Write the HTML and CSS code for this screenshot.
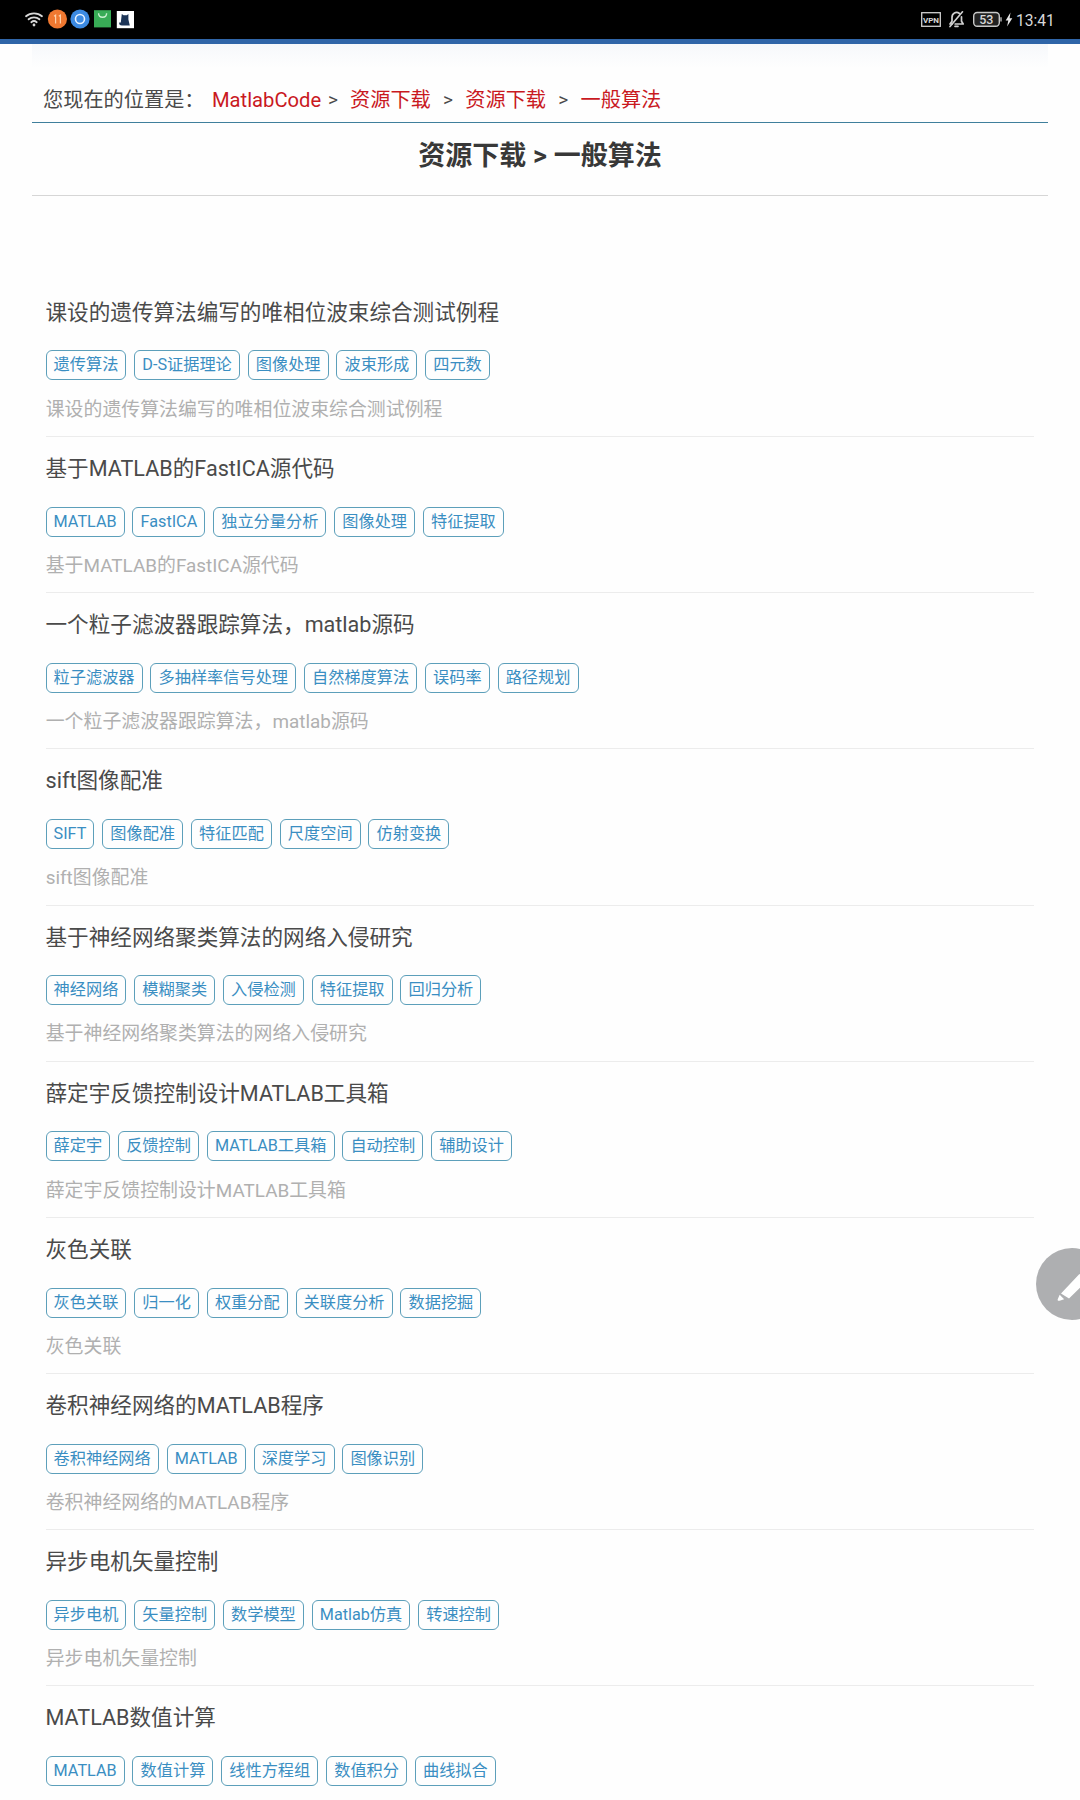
FILE: index.html
```html
<!DOCTYPE html>
<html lang="zh-CN">

<head>
  <meta charset="UTF-8">
  <meta name="viewport" content="width=device-width, initial-scale=1.0">
  <title>资源下载 - 一般算法</title>
  <link rel="stylesheet" href="styles.css">
</head>

<body>
  <div class="status">
    <svg class="status-left" width="140" height="39" viewBox="0 0 140 39">
      <!-- wifi -->
      <g fill="none" stroke="#d8d8d8" stroke-width="1.8" stroke-linecap="round">
        <path d="M26 16.2c4.400-3.800 11.600-3.800 16 0"/>
        <path d="M28.600 19.300c3-2.600 7.800-2.600 10.800 0"/>
        <path d="M31.300 22.200c1.500-1.300 3.900-1.300 5.400 0"/>
      </g>
      <circle cx="34" cy="25" r="1.400" fill="#d8d8d8"/>
      <!-- app notifications -->
      <circle cx="57.400" cy="19" r="9.600" fill="#f07830"/>
      <path d="M54 16.200l1.600-1v8.300M58.800 16.200l1.600-1v8.300" fill="none" stroke="#ffd0a8" stroke-width="1.200"/>
      <circle cx="80" cy="19" r="9.600" fill="#3c8ae2"/>
      <circle cx="80" cy="19" r="4.500" fill="none" stroke="#e4f0ff" stroke-width="1.600"/>
      <rect x="94" y="10.200" width="17" height="17.200" fill="#38ac56"/>
      <path d="M98.600 13.300c0 5.300 8 5.300 8 0" fill="none" stroke="#c9f0cf" stroke-width="1.400"/>
      <rect x="116.800" y="11" width="17.200" height="17.200" fill="#fff"/>
      <path d="M121.800 14l1.800 1.200h3.200l1.600-1.200v5.500l1.400 6h-7.800c-2.300 0-3-1-2.800-3h1.600z" fill="#1d3557"/>
    </svg>
    <svg class="status-right" width="160" height="39" viewBox="920 0 160 39">
      <rect x="921.700" y="12.700" width="18.600" height="13.600" fill="none" stroke="#d0d0d0" stroke-width="1.300"/>
      <text class="vpn" x="931" y="22.500" text-anchor="middle">VPN</text>
      <!-- muted bell -->
      <g fill="none" stroke="#d0d0d0" stroke-width="1.700" stroke-linecap="round" stroke-linejoin="round">
        <path d="M959.500 13.500c-3.500-2.400-7.500-.2-7.500 4v3.700l-2 2.800h2M961.500 16.800v4.400l1.700 2.800h-8"/>
        <path d="M962.500 11.800L950 26.500M955 26.300h3"/>
      </g>
      <!-- battery -->
      <rect x="973.700" y="12.500" width="25.600" height="13.800" rx="3.500" fill="#222" stroke="#c8c8c8" stroke-width="1.400"/>
      <path d="M1001 17.200v4.400" stroke="#c8c8c8" stroke-width="1.300"/>
      <text class="battery" x="986.300" y="23.900" text-anchor="middle">53</text>
      <path d="M1010.500 12.500l-4.800 8h2.600l-1.200 6 5.200-8.200h-2.700z" fill="#e8e8e8"/>
      <text class="clock" x="1016" y="26">13:41</text>
    </svg>
  </div>

  <div class="main">
    <div class="crumb">
      <span class="crumb-label">您现在的位置是：</span>
      <a class="site">MatlabCode</a><i class="first">&gt;</i>
      <a>资源下载</a><i>&gt;</i>
      <a>资源下载</a><i>&gt;</i>
      <a>一般算法</a>
    </div>
    <h1>资源下载 &gt; 一般算法</h1>

    <ul class="list">
      <li>
        <h2>课设的遗传算法编写的唯相位波束综合测试例程</h2>
        <div class="tags"><a>遗传算法</a><a>D-S证据理论</a><a>图像处理</a><a>波束形成</a><a>四元数</a></div>
        <p>课设的遗传算法编写的唯相位波束综合测试例程</p>
      </li>
      <li>
        <h2>基于MATLAB的FastICA源代码</h2>
        <div class="tags"><a>MATLAB</a><a>FastICA</a><a>独立分量分析</a><a>图像处理</a><a>特征提取</a></div>
        <p>基于MATLAB的FastICA源代码</p>
      </li>
      <li>
        <h2>一个粒子滤波器跟踪算法，matlab源码</h2>
        <div class="tags"><a>粒子滤波器</a><a>多抽样率信号处理</a><a>自然梯度算法</a><a>误码率</a><a>路径规划</a></div>
        <p>一个粒子滤波器跟踪算法，matlab源码</p>
      </li>
      <li>
        <h2>sift图像配准</h2>
        <div class="tags"><a>SIFT</a><a>图像配准</a><a>特征匹配</a><a>尺度空间</a><a>仿射变换</a></div>
        <p>sift图像配准</p>
      </li>
      <li>
        <h2>基于神经网络聚类算法的网络入侵研究</h2>
        <div class="tags"><a>神经网络</a><a>模糊聚类</a><a>入侵检测</a><a>特征提取</a><a>回归分析</a></div>
        <p>基于神经网络聚类算法的网络入侵研究</p>
      </li>
      <li>
        <h2>薛定宇反馈控制设计MATLAB工具箱</h2>
        <div class="tags"><a>薛定宇</a><a>反馈控制</a><a>MATLAB工具箱</a><a>自动控制</a><a>辅助设计</a></div>
        <p>薛定宇反馈控制设计MATLAB工具箱</p>
      </li>
      <li>
        <h2>灰色关联</h2>
        <div class="tags"><a>灰色关联</a><a>归一化</a><a>权重分配</a><a>关联度分析</a><a>数据挖掘</a></div>
        <p>灰色关联</p>
      </li>
      <li>
        <h2>卷积神经网络的MATLAB程序</h2>
        <div class="tags"><a>卷积神经网络</a><a>MATLAB</a><a>深度学习</a><a>图像识别</a></div>
        <p>卷积神经网络的MATLAB程序</p>
      </li>
      <li>
        <h2>异步电机矢量控制</h2>
        <div class="tags"><a>异步电机</a><a>矢量控制</a><a>数学模型</a><a>Matlab仿真</a><a>转速控制</a></div>
        <p>异步电机矢量控制</p>
      </li>
      <li>
        <h2>MATLAB数值计算</h2>
        <div class="tags"><a>MATLAB</a><a>数值计算</a><a>线性方程组</a><a>数值积分</a><a>曲线拟合</a></div>
      </li>
    </ul>
  </div>

  <!-- floating edit button -->
  <div class="edit">
    <svg width="44" height="72" viewBox="0 0 44 72">
      <circle cx="36" cy="36" r="36" fill="#aeafb1"/>
      <path d="M25 45.500L42 27.500Q44 25 48 26L52 32L33 50.500Z" fill="#fff"/>
      <path d="M23.700 46.800l4.400 4.400-4.500 1.500c-1.700.5-2.300-.2-1.800-1.700z" fill="#fff"/>
    </svg>
  </div>
</body>

</html>
```
FILE: styles.css
```css
* {
  margin: 0;
  padding: 0;
  box-sizing: border-box;
}

body {
  height: 1800px;
  overflow: hidden;
  position: relative;
  background: #fefefe;
  font-family: Roboto, "Noto Sans CJK SC", sans-serif;
  color: #4a4a4a;
}

ul,
li {
  list-style: none;
}

.status {
  display: flex;
  justify-content: space-between;
  height: 44px;
  background: #000;
  border-bottom: 5px solid #2f65a8;
}

.status text {
  fill: #d8d8d8;
}

.status .vpn {
  font-size: 8px;
  font-weight: 700;
}

.status .battery {
  font-size: 12.5px;
  font-weight: 500;
}

.status .clock {
  font-size: 15.6px;
}

.main {
  height: 1756px;
  padding: 28px 32px 0;
  background: linear-gradient(#f6f8fb, #fefefe 24px) no-repeat center top / 1016px 100%;
}

.crumb {
  display: flex;
  height: 51px;
  padding-left: 11px;
  border-bottom: 1px solid #3f7f9c;
  font-size: 20.2px;
  line-height: 56px;
  white-space: nowrap;
}

.crumb-label {
  width: 169px;
}

.crumb a {
  color: #c9191f;
}

.crumb .site {
  width: 108px;
}

.crumb i {
  width: 34.5px;
  text-align: center;
  font-style: normal;
  font-size: 19px;
}

.crumb .first {
  width: 30px;
  padding-right: 4px;
}

h1 {
  height: 73px;
  border-bottom: 1px solid #d6d6d6;
  font-size: 27px;
  line-height: 66px;
  text-align: center;
  color: #383838;
}

.list {
  padding: 84.8px 14px 0;
}

.list li {
  height: 156.2px;
  border-bottom: 1px solid #ececec;
}

.list li:last-child {
  border-bottom: none;
}

.list h2 {
  padding-top: 16px;
  height: 69.7px;
  margin-left: -0.5px;
  font-size: 21.6px;
  font-weight: 400;
  line-height: 32px;
}

.tags {
  display: flex;
  gap: 7.8px;
  height: 30px;
  margin-left: -0.5px;
}

.tags a {
  height: 30px;
  padding: 0 7.1px;
  border: 1px solid #5c9fba;
  border-radius: 6px;
  font-size: 16.2px;
  line-height: 27px;
  color: #3a8ec2;
  white-space: nowrap;
}

.list p {
  padding-top: 15.2px;
  margin-left: -0.3px;
  font-size: 18.9px;
  line-height: 28px;
  color: #b0b0b0;
}

.edit {
  position: absolute;
  right: 0;
  top: 1248px;
  width: 44px;
  height: 72px;
}

.edit svg {
  display: block;
}
```
